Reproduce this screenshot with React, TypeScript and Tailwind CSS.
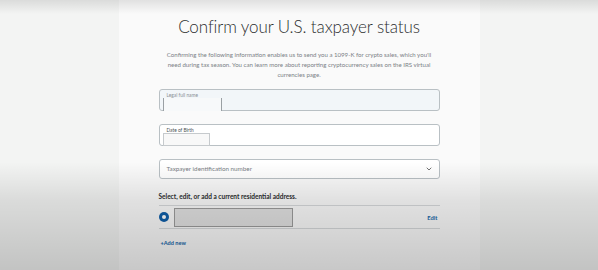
import { ChevronDown } from 'lucide-react';

export default function App() {
  return (
    <div className="relative w-[598px] h-[270px] overflow-hidden bg-[#f3f4f3] font-['Lato',sans-serif]">
      <div className="mx-auto w-[361px] h-full bg-[#fafafa] px-[40px] pt-[15px]">
        {/* Titel */}
        <h1 className="text-center text-[17px] leading-[24px] font-light tracking-[-0.1px] text-[#2c2e2f]">
          Confirm your U.S. taxpayer status
        </h1>

        <p className="mt-[11px] mx-[3px] text-center text-[6.1px] leading-[10px] text-[#7b8186]">
          Confirming the following information enables us to send you a 1099-K for crypto sales, which you'll need during tax season. You can learn more about reporting cryptocurrency sales on the IRS virtual currencies page.
        </p>

        {/* Name */}
        <div className="mt-[9px] h-[22px] rounded-[3px] border border-[#b9c0c4] bg-[#f2f6f9] pl-[3px] pt-[2px]">
          <div className="pl-[4px] text-[4.8px] leading-[6px] text-[#8a9095]">Legal full name</div>
          <div className="h-[13px] w-[59px] -mt-[0.5px] border-x border-[#9aa0a4] bg-[#f7f9fa]" />
        </div>

        {/* Geburtsdatum */}
        <div className="mt-[13px] h-[22px] rounded-[3px] border border-[#b9c0c4] bg-white pl-[3px] pt-[2px]">
          <div className="pl-[4px] text-[4.8px] leading-[6px] text-[#4a4f53]">Date of Birth</div>
          <div className="h-[13px] w-[47px] -mt-[0.5px] border border-[#c6cacd] bg-[#f8f8f8]" />
        </div>

        {/* Steuer-ID */}
        <div className="mt-[13px] h-[20px] rounded-[3px] border border-[#b9c0c4] bg-white flex items-center justify-between pl-[7px] pr-[6px]">
          <span className="text-[6.3px] text-[#7a8085]">Taxpayer identification number</span>
          <ChevronDown className="w-[8px] h-[8px] text-[#555]" strokeWidth={2.5} />
        </div>

        <div className="mt-[14px] text-[6.5px] leading-[8px] font-bold text-[#2c2e2f]">
          Select, edit, or add a current residential address.
        </div>

        <div className="mt-[4px] border-y border-[#d6d9db] h-[24px] flex items-center">
          <div className="w-[10px] h-[10px] rounded-full bg-[#0f5ea8] flex items-center justify-center">
            <div className="w-[4px] h-[4px] rounded-full bg-white" />
          </div>
          <div className="ml-[5px] w-[119px] h-[19px] border border-[#9c9c9c] bg-[#e2e2e2]" />
          <span className="ml-auto mr-[2px] mt-[3px] text-[5.8px] font-bold text-[#1564a8]">Edit</span>
        </div>

        <div className="mt-[10px] pl-[2px] text-[5.6px] font-bold text-[#1564a8]">+Add new</div>
      </div>

      {/* Abdunkelung wie im Video-Standbild */}
      <div className="pointer-events-none absolute inset-0 bg-[linear-gradient(to_bottom,rgba(0,0,0,0.1)_0px,rgba(0,0,0,0)_14px,rgba(0,0,0,0)_162px,rgba(0,0,0,0.1)_200px,rgba(0,0,0,0.2)_270px)]" />
    </div>
  );
}
